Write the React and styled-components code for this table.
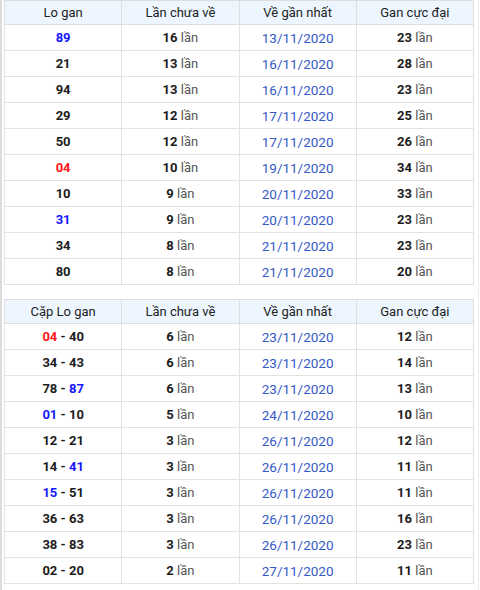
import styled, { createGlobalStyle } from "styled-components"

const GlobalStyle = createGlobalStyle`
body {
  margin: 0;
  background: #fff;
  font-family: Roboto, "Liberation Sans", Arial, sans-serif;
}
`

const loGan = [
  { num: "89", color: "blue", miss: 16, last: "13/11/2020", max: 23 },
  { num: "21", miss: 13, last: "16/11/2020", max: 28 },
  { num: "94", miss: 13, last: "16/11/2020", max: 23 },
  { num: "29", miss: 12, last: "17/11/2020", max: 25 },
  { num: "50", miss: 12, last: "17/11/2020", max: 26 },
  { num: "04", color: "red", miss: 10, last: "19/11/2020", max: 34 },
  { num: "10", miss: 9, last: "20/11/2020", max: 33 },
  { num: "31", color: "blue", miss: 9, last: "20/11/2020", max: 23 },
  { num: "34", miss: 8, last: "21/11/2020", max: 23 },
  { num: "80", miss: 8, last: "21/11/2020", max: 20 },
]

const capGan = [
  { a: "04", ac: "red", b: "40", miss: 6, last: "23/11/2020", max: 12 },
  { a: "34", b: "43", miss: 6, last: "23/11/2020", max: 14 },
  { a: "78", b: "87", bc: "blue", miss: 6, last: "23/11/2020", max: 13 },
  { a: "01", ac: "blue", b: "10", miss: 5, last: "24/11/2020", max: 10 },
  { a: "12", b: "21", miss: 3, last: "26/11/2020", max: 12 },
  { a: "14", b: "41", bc: "blue", miss: 3, last: "26/11/2020", max: 11 },
  { a: "15", ac: "blue", b: "51", miss: 3, last: "26/11/2020", max: 11 },
  { a: "36", b: "63", miss: 3, last: "26/11/2020", max: 16 },
  { a: "38", b: "83", miss: 3, last: "26/11/2020", max: 23 },
  { a: "02", b: "20", miss: 2, last: "27/11/2020", max: 11 },
]

const Page = styled.div`
  min-height: 590px;
  box-sizing: border-box;
  border-left: 2px solid #dcdcdc;
  border-right: 1px solid #eeeeee;
  margin-right: 1px;
  padding: 0 4px 0 2px;
  display: flex;
  flex-direction: column;
  gap: 14px;
`

const Table = styled.table`
  width: 100%;
  border-collapse: collapse;
  table-layout: fixed;
  border: 1px solid #dedede;
  border-top: ${(p) => (p.$noTop ? "none" : "1px solid #dedede")};
`

const Th = styled.th`
  height: 23px;
  padding: 0;
  background: #edf6ff;
  border: 1px solid #dedede;
  font-weight: 400;
  font-size: 13px;
  color: #222;
  text-align: center;
`

const Td = styled.td`
  height: 25px;
  padding: 0;
  border: 1px solid #e2e2e2;
  text-align: center;
  font-size: 13px;
  color: #1c1c1c;
`

const Num = styled.b`
  font-weight: 700;
  color: ${(p) => (p.$color === "blue" ? "#1616ff" : p.$color === "red" ? "#ff1616" : "#1c1c1c")};
`

const Lan = styled.span`
  color: #555;
  font-weight: 400;
`

const DateText = styled.span`
  color: #3559c7;
  font-size: 13.5px;
`

const Count = ({ n }) => (
  <>
    <Num>{n}</Num> <Lan>lần</Lan>
  </>
)

const Header = ({ first }) => (
  <thead>
    <tr>
      <Th>{first}</Th>
      <Th>Lần chưa về</Th>
      <Th>Về gần nhất</Th>
      <Th>Gan cực đại</Th>
    </tr>
  </thead>
)

export default function App() {
  return (
    <>
      <GlobalStyle />
      <Page>
        <Table $noTop>
          <Header first="Lo gan" />
          <tbody>
            {loGan.map((r) => (
              <tr key={r.num}>
                <Td><Num $color={r.color}>{r.num}</Num></Td>
                <Td><Count n={r.miss} /></Td>
                <Td><DateText>{r.last}</DateText></Td>
                <Td><Count n={r.max} /></Td>
              </tr>
            ))}
          </tbody>
        </Table>
        <Table>
          <Header first="Cặp Lo gan" />
          <tbody>
            {capGan.map((r) => (
              <tr key={r.a + r.b}>
                <Td>
                  <Num $color={r.ac}>{r.a}</Num> <Num>-</Num> <Num $color={r.bc}>{r.b}</Num>
                </Td>
                <Td><Count n={r.miss} /></Td>
                <Td><DateText>{r.last}</DateText></Td>
                <Td><Count n={r.max} /></Td>
              </tr>
            ))}
          </tbody>
        </Table>
      </Page>
    </>
  )
}
